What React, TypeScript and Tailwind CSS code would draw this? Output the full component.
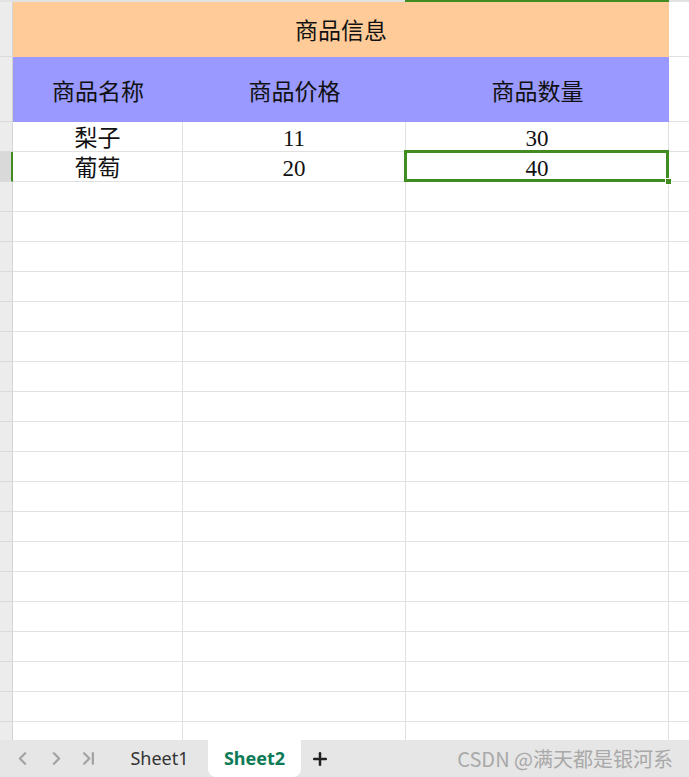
import React from "react";
import { ChevronLeft, ChevronRight, ChevronLast, Plus } from "lucide-react";

const rows = [
  ["梨子", "11", "30"],
  ["葡萄", "20", "40"],
];

const cellFont =
  "font-['Liberation_Serif','Noto_Sans_CJK_SC',serif] text-[23px] leading-none text-[#111]";

function RowHead({ selected, last }: { selected?: boolean; last?: boolean }) {
  return (
    <div
      className={`w-[13px] shrink-0 ${last ? "" : "border-b border-b-[#dadada]"} ${
        selected
          ? "bg-[#d9d9d9] border-r-2 border-r-[#418c20]"
          : "bg-[#ececec] border-r border-r-[#d4d4d4]"
      }`}
    />
  );
}

function Cell({ w, children, last }: { w: string; children?: React.ReactNode; last?: boolean }) {
  return (
    <div
      className={`${w} shrink-0 border-r ${last ? "" : "border-b"} border-[#e1e1e1] flex items-center justify-center pt-[4px] ${cellFont}`}
    >
      {children}
    </div>
  );
}

export default function App() {
  return (
    <div className="w-[689px] h-[777px] bg-white overflow-hidden flex flex-col">
      <div className="relative h-[740px] overflow-hidden">
        {/* column header edge */}
        <div className="flex h-[2px]">
          <div className="w-[405px] bg-[#e2e2e2]" />
          <div className="w-[264px] bg-[#418c20]" />
          <div className="flex-1 bg-[#e2e2e2]" />
        </div>

        {/* title row */}
        <div className="flex h-[55px]">
          <RowHead />
          <div className={`w-[656px] shrink-0 bg-[#ffcc99] flex items-center justify-center pt-[4px] ${cellFont}`}>
            商品信息
          </div>
          <div className="flex-1 border-b border-[#e1e1e1]" />
        </div>

        {/* header row */}
        <div className="flex h-[65px]">
          <RowHead />
          <div className="w-[656px] shrink-0 bg-[#9999ff] flex">
            <div className={`w-[170px] flex items-center justify-center pt-[5px] ${cellFont}`}>商品名称</div>
            <div className={`w-[223px] flex items-center justify-center pt-[5px] ${cellFont}`}>商品价格</div>
            <div className={`flex-1 flex items-center justify-center pt-[5px] ${cellFont}`}>商品数量</div>
          </div>
          <div className="flex-1 border-b border-[#e1e1e1]" />
        </div>

        {Array.from({ length: 20 }).map((_, i) => {
          const d = rows[i];
          return (
            <div key={i} className="flex h-[30px]">
              <RowHead selected={i === 1} />
              <Cell w="w-[170px]">{d?.[0]}</Cell>
              <Cell w="w-[223px]">{d?.[1]}</Cell>
              <Cell w="w-[263px]">{d?.[2]}</Cell>
              <div className="flex-1 border-b border-[#e1e1e1]" />
            </div>
          );
        })}

        <div className="flex h-[18px]">
          <RowHead last />
          <Cell w="w-[170px]" last />
          <Cell w="w-[223px]" last />
          <Cell w="w-[263px]" last />
          <div className="flex-1" />
        </div>

        {/* selected cell */}
        <div className="absolute left-[404px] top-[150px] w-[265px] h-[32px] border-[3px] border-[#418c20]" />
        <div className="absolute left-[665px] top-[178px] w-[7px] h-[7px] bg-[#418c20] border border-white" />
      </div>

      {/* sheet tabs */}
      <div className="h-[37px] bg-[#e6e6e6] flex items-stretch pl-[5px] font-['Noto_Sans','Noto_Sans_CJK_SC',sans-serif]">
        <div className="w-[34px] flex items-center justify-center text-[#a3a3a3]">
          <ChevronLeft size={21} strokeWidth={2.6} />
        </div>
        <div className="w-[34px] flex items-center justify-center text-[#a3a3a3]">
          <ChevronRight size={21} strokeWidth={2.6} />
        </div>
        <div className="w-[30px] flex items-center justify-center text-[#a3a3a3]">
          <ChevronLast size={21} strokeWidth={2.6} />
        </div>
        <div className="ml-[8px] w-[97px] flex items-center justify-center text-[18px] text-[#333]">
          Sheet1
        </div>
        <div className="w-[93px] -mt-px bg-white rounded-b-[8px] flex items-center justify-center text-[18px] font-bold text-[#0b7a55]">
          Sheet2
        </div>
        <div className="w-[38px] flex items-center justify-center text-[#222]">
          <Plus size={20} strokeWidth={3} />
        </div>
        <div className="ml-auto pr-[16px] flex items-center text-[20px] text-[#a9a9a9] font-['Noto_Sans_CJK_SC',sans-serif]">
          CSDN @满天都是银河系
        </div>
      </div>
    </div>
  );
}
